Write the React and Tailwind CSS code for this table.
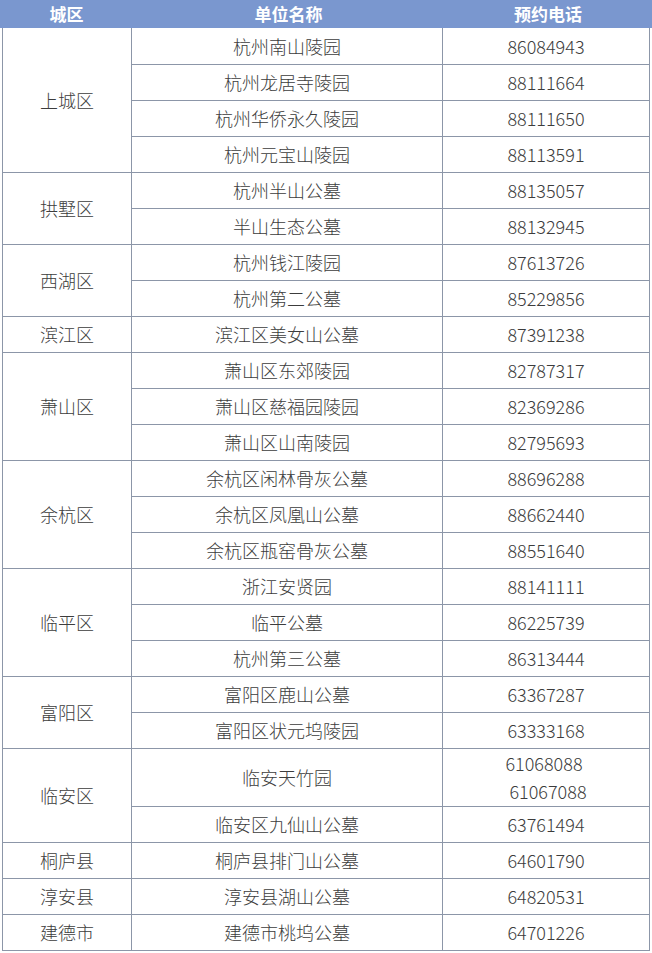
const groups = [
  ["上城区", [["杭州南山陵园", "86084943"], ["杭州龙居寺陵园", "88111664"], ["杭州华侨永久陵园", "88111650"], ["杭州元宝山陵园", "88113591"]]],
  ["拱墅区", [["杭州半山公墓", "88135057"], ["半山生态公墓", "88132945"]]],
  ["西湖区", [["杭州钱江陵园", "87613726"], ["杭州第二公墓", "85229856"]]],
  ["滨江区", [["滨江区美女山公墓", "87391238"]]],
  ["萧山区", [["萧山区东郊陵园", "82787317"], ["萧山区慈福园陵园", "82369286"], ["萧山区山南陵园", "82795693"]]],
  ["余杭区", [["余杭区闲林骨灰公墓", "88696288"], ["余杭区凤凰山公墓", "88662440"], ["余杭区瓶窑骨灰公墓", "88551640"]]],
  ["临平区", [["浙江安贤园", "88141111"], ["临平公墓", "86225739"], ["杭州第三公墓", "86313444"]]],
  ["富阳区", [["富阳区鹿山公墓", "63367287"], ["富阳区状元坞陵园", "63333168"]]],
  ["临安区", [["临安天竹园", ["61068088", "61067088"]], ["临安区九仙山公墓", "63761494"]]],
  ["桐庐县", [["桐庐县排门山公墓", "64601790"]]],
  ["淳安县", [["淳安县湖山公墓", "64820531"]]],
  ["建德市", [["建德市桃坞公墓", "64701226"]]],
];

export default function App() {
  let first = true;
  return (
    <div
      className="w-[652px] h-[953px] bg-white text-[#3c3c3c]"
      style={{ fontFamily: '"Noto Sans CJK SC", "Noto Sans", sans-serif' }}
    >
      <div className="flex h-[28px] items-center bg-[#7a97cf] text-white font-bold text-[17px]">
        <div className="w-[133px] text-center">城区</div>
        <div className="w-[311px] text-center">单位名称</div>
        <div className="flex-1 text-center">预约电话</div>
      </div>
      <table className="ml-[2px] w-[647px] table-fixed border-collapse text-[18px] font-light">
        <colgroup>
          <col className="w-[129px]" />
          <col className="w-[311px]" />
          <col className="w-[207px]" />
        </colgroup>
        <tbody>
          {groups.map(([district, rows]) =>
            rows.map(([name, phone], i) => {
              const top = first ? "border-t-0" : "";
              first = false;
              const multi = Array.isArray(phone);
              return (
                <tr key={district + i} className={multi ? "h-[58px]" : "h-[36px]"}>
                  {i === 0 && (
                    <td
                      rowSpan={rows.length}
                      className={"border border-[#8c96a8] text-center align-middle p-0 leading-[24px] " + top}
                    >
                      {district}
                    </td>
                  )}
                  <td className={"border border-[#8c96a8] text-center align-middle p-0 leading-[24px] " + top}>
                    {name}
                  </td>
                  <td className={"border border-[#8c96a8] text-center align-middle p-0 leading-[24px] " + top}>
                    {multi ? (
                      <div className="flex flex-col items-center leading-[28px]">
                        <span className="pr-[4px]">{phone[0]}</span>
                        <span className="pl-[4px]">{phone[1]}</span>
                      </div>
                    ) : (
                      phone
                    )}
                  </td>
                </tr>
              );
            })
          )}
        </tbody>
      </table>
    </div>
  );
}
